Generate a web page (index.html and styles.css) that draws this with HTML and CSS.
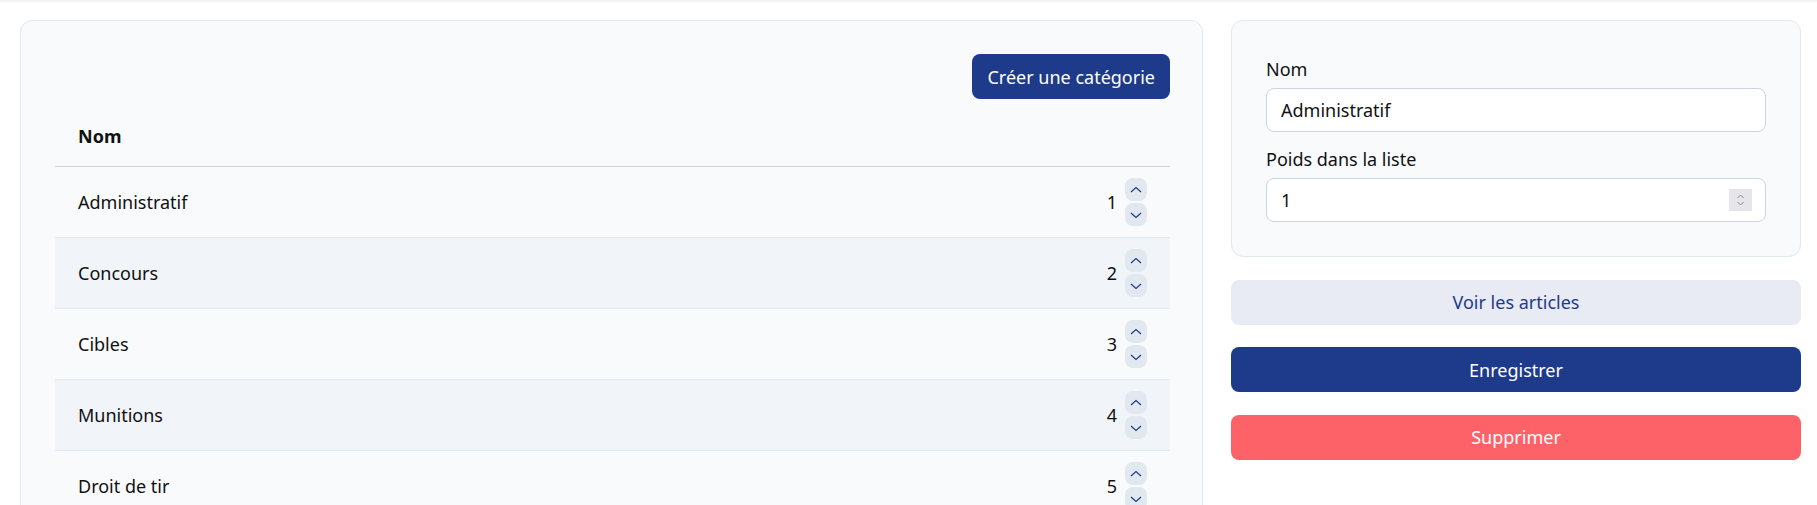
FILE: index.html
```html
<!DOCTYPE html>
<html lang="fr">
<head>
    <meta charset="UTF-8">
    <meta name="viewport" content="width=device-width, initial-scale=1.0">
    <title>Catégories</title>
    <link rel="stylesheet" href="styles.css">
</head>
<body>
    <div class="topbar"></div>
    <main class="page">
        <section class="card list-card">
            <div class="toolbar">
                <button class="btn btn-primary btn-create">Créer une catégorie</button>
            </div>
            <table class="cat-table">
                <thead>
                    <tr><th>Nom</th><th></th></tr>
                </thead>
                <tbody>
                    <tr>
                        <td>Administratif</td>
                        <td><div class="weight"><span>1</span><div class="arrows">
                            <button class="arrow"><svg viewBox="0 0 14 14"><path d="M2 9 7 4.5 12 9"/></svg></button>
                            <button class="arrow"><svg viewBox="0 0 14 14"><path d="M2 5 7 9.5 12 5"/></svg></button>
                        </div></div></td>
                    </tr>
                    <tr>
                        <td>Concours</td>
                        <td><div class="weight"><span>2</span><div class="arrows">
                            <button class="arrow"><svg viewBox="0 0 14 14"><path d="M2 9 7 4.5 12 9"/></svg></button>
                            <button class="arrow"><svg viewBox="0 0 14 14"><path d="M2 5 7 9.5 12 5"/></svg></button>
                        </div></div></td>
                    </tr>
                    <tr>
                        <td>Cibles</td>
                        <td><div class="weight"><span>3</span><div class="arrows">
                            <button class="arrow"><svg viewBox="0 0 14 14"><path d="M2 9 7 4.5 12 9"/></svg></button>
                            <button class="arrow"><svg viewBox="0 0 14 14"><path d="M2 5 7 9.5 12 5"/></svg></button>
                        </div></div></td>
                    </tr>
                    <tr>
                        <td>Munitions</td>
                        <td><div class="weight"><span>4</span><div class="arrows">
                            <button class="arrow"><svg viewBox="0 0 14 14"><path d="M2 9 7 4.5 12 9"/></svg></button>
                            <button class="arrow"><svg viewBox="0 0 14 14"><path d="M2 5 7 9.5 12 5"/></svg></button>
                        </div></div></td>
                    </tr>
                    <tr>
                        <td>Droit de tir</td>
                        <td><div class="weight"><span>5</span><div class="arrows">
                            <button class="arrow"><svg viewBox="0 0 14 14"><path d="M2 9 7 4.5 12 9"/></svg></button>
                            <button class="arrow"><svg viewBox="0 0 14 14"><path d="M2 5 7 9.5 12 5"/></svg></button>
                        </div></div></td>
                    </tr>
                </tbody>
            </table>
        </section>

        <aside class="side">
            <form class="card edit-card">
                <label for="name">Nom</label>
                <input type="text" id="name" class="field" value="Administratif">

                <label for="weight" class="second">Poids dans la liste</label>
                <div class="field number-field">
                    <input type="text" id="weight" value="1">
                    <span class="spin">
                        <svg viewBox="0 0 22 22"><path d="M8 9 11 6 14 9M8 13 11 16 14 13"/></svg>
                    </span>
                </div>
            </form>
            <button class="btn btn-light">Voir les articles</button>
            <button class="btn btn-primary">Enregistrer</button>
            <button class="btn btn-danger">Supprimer</button>
        </aside>
    </main>
</body>
</html>
```

FILE: styles.css
```css
body {
    margin: 0;
    font-family: "Noto Sans", "Segoe UI", sans-serif;
    font-size: 18px;
    color: #111;
    background: #fff;
}
.topbar {
    height: 3px;
    background: linear-gradient(#eef0f3, #fff);
}
.page {
    display: grid;
    grid-template-columns: 1183px 570px;
    gap: 28px;
    padding: 17px 0 0 20px;
    align-items: start;
}
.card {
    background: #f8fafc;
    border: 1px solid #e2e8f0;
    border-radius: 12px;
}
.list-card {
    padding: 33px 32px 33px 34px;
}
.toolbar {
    display: flex;
    justify-content: flex-end;
}
.btn {
    font: inherit;
    border: 0;
    border-radius: 8px;
    height: 45px;
    cursor: pointer;
}
.btn-create {
    padding: 0 15px;
}
.btn-primary {
    background: #1e3a8a;
    color: #fff;
}
.btn-light {
    background: #e8ebf4;
    color: #1e3a8a;
}
.btn-danger {
    background: #fe6269;
    color: #fff;
}
.cat-table {
    width: 100%;
    border-collapse: collapse;
    margin-top: 6px;
}
.cat-table th {
    text-align: left;
    font-weight: 700;
    line-height: 30px;
    padding: 16px 23px 15px;
    border-bottom: 1px solid #cbd5e1;
}
.cat-table td {
    line-height: 30px;
    padding: 11px 23px;
    border-bottom: 1px solid #e2e8f0;
}
.cat-table tbody tr:nth-child(even) {
    background: #f1f5f9;
}
.weight {
    display: flex;
    justify-content: flex-end;
    align-items: center;
    gap: 8px;
}
.arrows {
    display: flex;
    flex-direction: column;
    gap: 2px;
}
.arrow {
    width: 22px;
    height: 23px;
    padding: 0;
    border: 0;
    border-radius: 8px;
    background: #e2e8f0;
    display: flex;
    align-items: center;
    justify-content: center;
}
.arrow svg {
    width: 14px;
    height: 14px;
    fill: none;
    stroke: #1e3a8a;
    stroke-width: 1.2;
}
.side {
    display: flex;
    flex-direction: column;
    gap: 22.5px;
}
.edit-card {
    display: flex;
    flex-direction: column;
    padding: 33px 34px 34px;
}
.edit-card label {
    line-height: 30px;
    margin-bottom: 4px;
}
.edit-card label.second {
    margin-top: 12px;
}
.field {
    box-sizing: border-box;
    height: 44px;
    border: 1px solid #cbd5e1;
    border-radius: 8px;
    background: #fff;
    font: inherit;
    color: #111;
    padding: 0 14px;
}
.number-field {
    display: flex;
    align-items: center;
    padding-right: 13px;
}
.number-field input {
    flex: 1;
    border: 0;
    outline: 0;
    font: inherit;
    color: #111;
    padding: 0;
    background: transparent;
}
.spin {
    width: 23px;
    height: 22px;
    background: #e6e6ea;
    display: flex;
}
.spin svg {
    width: 23px;
    height: 22px;
    fill: none;
    stroke: #8a8a95;
    stroke-width: 1;
}
```
